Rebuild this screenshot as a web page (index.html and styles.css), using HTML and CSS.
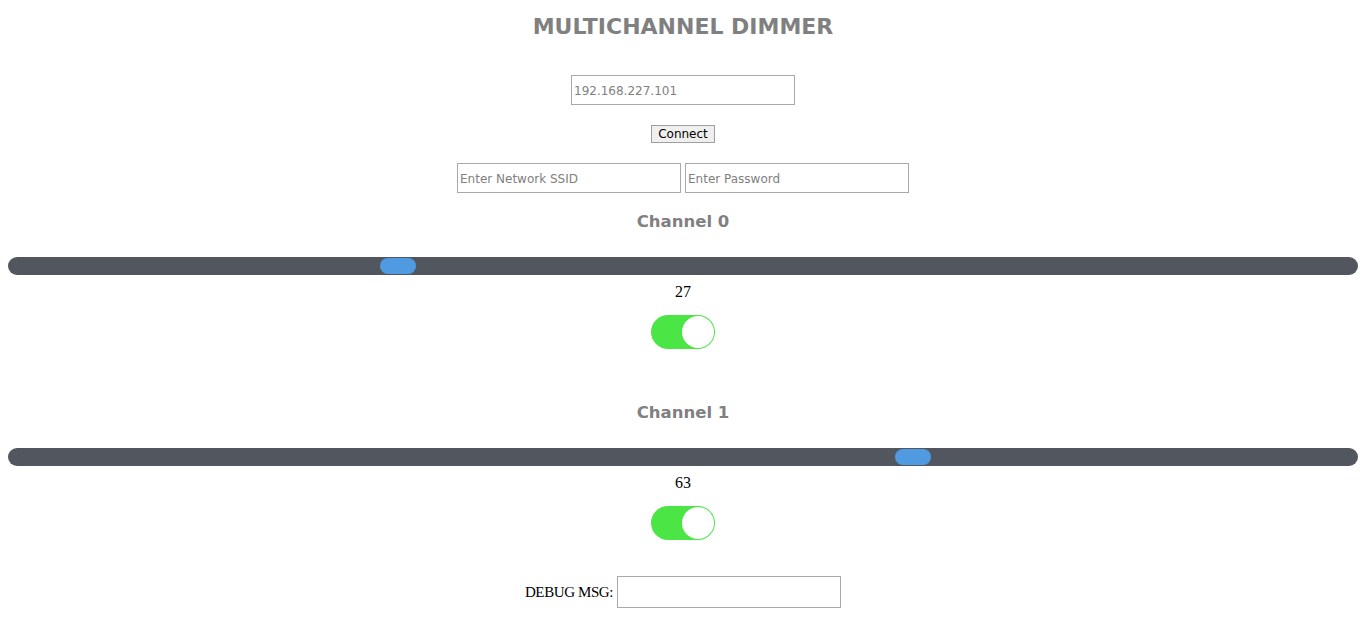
FILE: index.html
```html
<!DOCTYPE html>
<html lang="en">

<head>
    <meta charset="UTF-8">
    <meta name="viewport" content="width=device-width, initial-scale=1.0">
    <title>Multichannel Dimmer</title>
    <link rel="stylesheet" href="styles.css">
</head>

<body>

    <h2 class="title">MULTICHANNEL DIMMER</h2>

    <div class="row row-ip">
        <input type="text" class="field" id="ip" value="192.168.227.101">
    </div>
    <div class="row row-btn">
        <button class="btn" id="connect">Connect</button>
    </div>
    <div class="row row-wifi">
        <input type="text" class="field" id="ssid" placeholder="Enter Network SSID">
        <input type="password" class="field" id="pass" placeholder="Enter Password">
    </div>

    <section class="channel">
        <h3 class="channel-name">Channel 0</h3>
        <input type="range" class="slider" min="0" max="1000" value="283">
        <p class="level">27</p>
        <label class="switch">
            <input type="checkbox" checked>
            <span class="knob"></span>
        </label>
    </section>

    <section class="channel">
        <h3 class="channel-name">Channel 1</h3>
        <input type="range" class="slider" min="0" max="1000" value="675">
        <p class="level">63</p>
        <label class="switch">
            <input type="checkbox" checked>
            <span class="knob"></span>
        </label>
    </section>

    <div class="row row-debug">
        <span class="debug-label">DEBUG MSG:</span>
        <input type="text" class="field debug-field" id="debug">
    </div>

</body>

</html>
```

FILE: styles.css
```css
body {
    margin: 0 8px;
    padding: 0;
    font-family: "Liberation Serif", "Times New Roman", serif;
    font-size: 16px;
    color: #000;
    background: #fff;
}

.title {
    margin: 0;
    padding-top: 13px;
    font-family: "DejaVu Sans", Verdana, sans-serif;
    font-size: 22px;
    line-height: 28px;
    font-weight: bold;
    color: #808080;
    text-align: center;
}

.row {
    display: flex;
    justify-content: center;
    align-items: center;
    gap: 4px;
}

.row-ip {
    margin-top: 34px;
}

.row-btn {
    margin-top: 20px;
}

.row-wifi {
    margin-top: 20px;
}

.field {
    box-sizing: border-box;
    width: 224px;
    height: 30px;
    margin: 0;
    padding: 1px 2px 0;
    border: 1px solid #a9a9a9;
    font-family: "DejaVu Sans", Verdana, sans-serif;
    font-size: 12px;
    color: #808080;
    outline: none;
}

.field::placeholder {
    color: #808080;
}

.btn {
    box-sizing: border-box;
    width: 64px;
    height: 18px;
    padding: 1px 0 0;
    border: 1px solid #a0a0a0;
    background: #efefef;
    font-family: "DejaVu Sans", Verdana, sans-serif;
    font-size: 12px;
    line-height: 15px;
    color: #000;
}

.channel {
    margin-top: 19px;
    text-align: center;
}

.channel + .channel {
    margin-top: 54px;
}

.channel-name {
    margin: 0;
    font-family: "DejaVu Sans", Verdana, sans-serif;
    font-size: 16.5px;
    line-height: 20px;
    font-weight: bold;
    color: #808080;
}

.slider {
    -webkit-appearance: none;
    appearance: none;
    display: block;
    width: 100%;
    height: 18px;
    margin: 25px 0 0;
    border-radius: 9px;
    background: #52575f;
    outline: none;
}

.slider::-webkit-slider-thumb {
    -webkit-appearance: none;
    appearance: none;
    width: 36px;
    height: 16px;
    border-radius: 8px;
    background: #4f9ae0;
    border: none;
}

.level {
    margin: 8px 0 0;
    line-height: 18px;
}

.switch {
    position: relative;
    display: inline-block;
    width: 64px;
    height: 34px;
    margin-top: 14px;
    vertical-align: top;
}

.switch input {
    display: none;
}

.knob {
    position: absolute;
    inset: 0;
    border-radius: 17px;
    background: #4be545;
}

.knob::before {
    content: "";
    position: absolute;
    top: 1px;
    right: 1px;
    width: 32px;
    height: 32px;
    border-radius: 50%;
    background: #fff;
}

.row-debug {
    margin-top: 36px;
}

.debug-label {
    font-size: 15px;
    letter-spacing: -0.4px;
}

.debug-field {
    height: 32px;
}
```
